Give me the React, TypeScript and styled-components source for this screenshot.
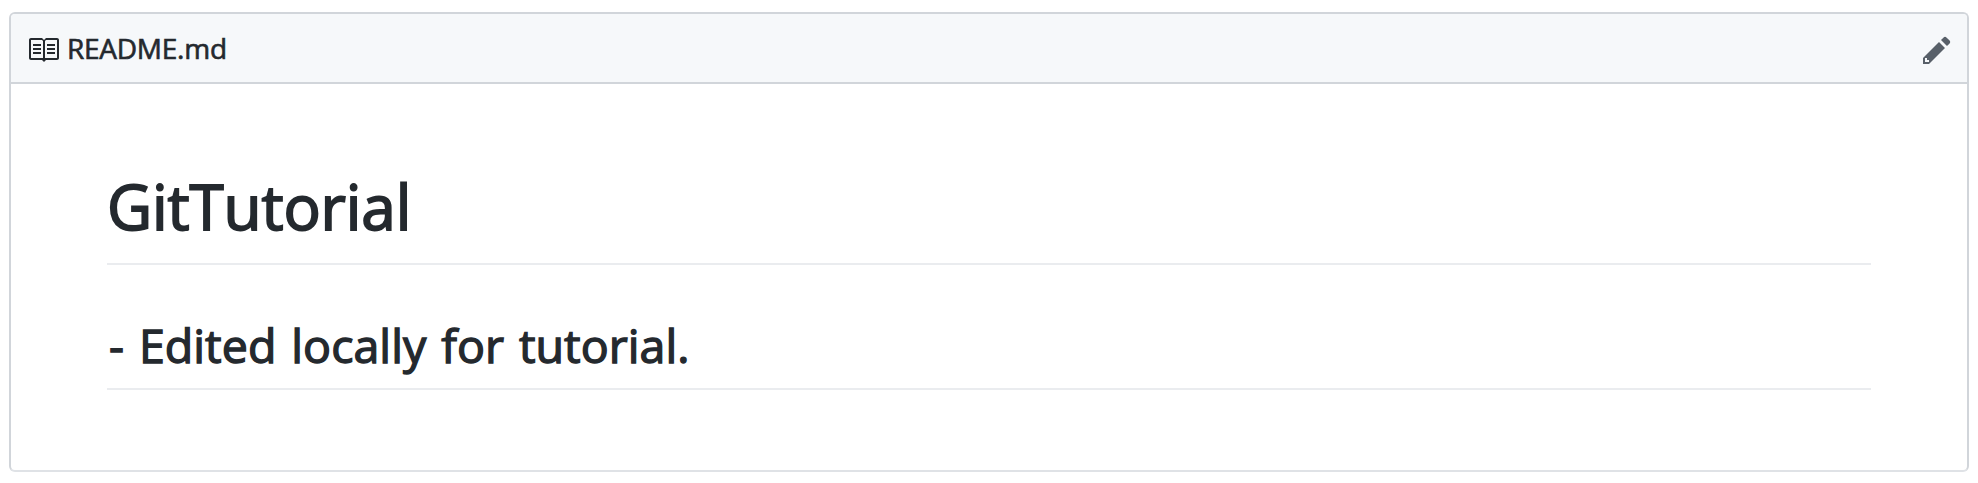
import React from "react";
import styled, { createGlobalStyle } from "styled-components";

const GlobalStyle = createGlobalStyle`
  * { box-sizing: border-box; }
  body {
    margin: 0;
    background: #fff;
    color: #24292e;
    font-family: "Segoe UI", "Open Sans", "Noto Sans", sans-serif;
  }
`;

const Page = styled.main`
  padding: 12px 9px 11px;
`;

const Box = styled.section`
  height: 460px;
  border: 2px solid #d1d5da;
  border-bottom-color: #dfe2e6;
  border-radius: 6px;
  overflow: hidden;
`;

const BoxHeader = styled.header`
  display: flex;
  align-items: center;
  justify-content: space-between;
  height: 70px;
  padding: 0 16px;
  background: #f6f8fa;
  border-bottom: 2px solid #d1d5da;
`;

const FileTitle = styled.h3`
  display: flex;
  align-items: center;
  gap: 8px;
  margin: 0;
  font-size: 28px;
  line-height: 40px;
  font-weight: 400;
  letter-spacing: -0.25px;
  -webkit-text-stroke: 0.65px currentColor;
`;

const Icon = styled.svg`
  display: block;
  flex: none;
  height: 32px;
  margin-top: 4px;
  fill: currentColor;
`;

const EditButton = styled.button`
  padding: 0;
  border: 0;
  background: none;
  color: #586069;
  cursor: pointer;
`;

const Article = styled.article`
  padding: 80px 96px;
`;

const Heading = styled.h1<{ $size: number; $tracking?: number; $space?: number; $indent?: number }>`
  margin: 0 0 48px;
  padding: 2px 0 calc(0.3em - 2px) ${(p) => p.$indent ?? 0}px;
  border-bottom: 2px solid #eaecef;
  font-size: ${(p) => p.$size}px;
  line-height: ${(p) => p.$size * 1.25}px;
  font-weight: 400;
  letter-spacing: ${(p) => p.$tracking ?? 0}px;
  word-spacing: ${(p) => p.$space ?? 0}px;
  white-space: nowrap;
  -webkit-text-stroke: 0.028em currentColor;
`;

const HeadingText = styled.span`
  display: block;
  font-size: 0.97em;
`;

export default function App() {
  return (
    <Page>
      <GlobalStyle />
      <Box>
        <BoxHeader>
          <FileTitle>
            <Icon viewBox="0 0 16 16" width="32" aria-hidden="true">
              <path d="M3 5h4v1H3V5zm0 3h4V7H3v1zm0 2h4V9H3v1zm11-5h-4v1h4V5zm0 2h-4v1h4V7zm0 2h-4v1h4V9zm2-6v9c0 .55-.45 1-1 1H9.5l-1 1-1-1H2c-.55 0-1-.45-1-1V3c0-.55.45-1 1-1h5.5l1 1 1-1H15c.55 0 1 .45 1 1zm-8 .5L7.5 3H2v9h6V3.5zm7-.5H9.5l-.5.5V12h6V3z" />
            </Icon>
            <span>README.md</span>
          </FileTitle>
          <EditButton aria-label="Edit this file">
            <Icon viewBox="0 0 14 16" width="28" aria-hidden="true">
              <path d="M0 12v3h3l8-8-3-3-8 8zm3 2H1v-2h1v1h1v1zm10.3-9.3L12 6 9 3l1.3-1.3a.996.996 0 0 1 1.41 0l1.59 1.59c.39.39.39 1.02 0 1.41z" />
            </Icon>
          </EditButton>
        </BoxHeader>
        <Article>
          <Heading $size={64} $tracking={-0.15}>
            <HeadingText>GitTutorial</HeadingText>
          </Heading>
          <Heading as="h2" $size={48} $tracking={0.03} $space={2.8} $indent={2}>
            <HeadingText>- Edited locally for tutorial.</HeadingText>
          </Heading>
        </Article>
      </Box>
    </Page>
  );
}
